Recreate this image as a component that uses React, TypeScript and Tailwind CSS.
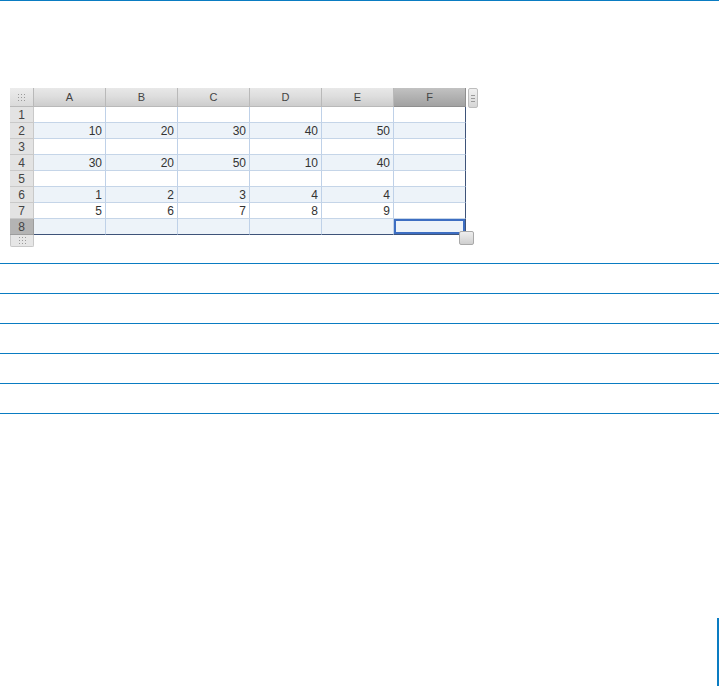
const columns = ["A", "B", "C", "D", "E", "F"];

const rows: (number | null)[][] = [
  [null, null, null, null, null, null],
  [10, 20, 30, 40, 50, null],
  [null, null, null, null, null, null],
  [30, 20, 50, 10, 40, null],
  [null, null, null, null, null, null],
  [1, 2, 3, 4, 4, null],
  [5, 6, 7, 8, 9, null],
  [null, null, null, null, null, null],
];

function Dots({ className = "" }: { className?: string }) {
  return (
    <svg width="9" height="7" viewBox="0 0 9 7" className={className}>
      {[0, 3, 6].map((y) =>
        [1, 4, 7].map((x) => (
          <rect key={`${x}-${y}`} x={x} y={y} width="1" height="1" fill="#9a9a9a" />
        ))
      )}
    </svg>
  );
}

function Sheet() {
  return (
    <div className="relative flex items-start">
      <div>
        <div className="grid grid-cols-[24px_repeat(6,72px)] font-['Liberation_Sans',Arial,sans-serif] text-[11px] text-[#333]">
          {/* header row */}
          <div className="flex h-[19px] items-center justify-center border-r border-b border-[#b9b9b9] bg-[linear-gradient(#ececec,#dadada)]">
            <Dots />
          </div>
          {columns.map((col) => (
            <div
              key={col}
              className={
                col === "F"
                  ? "flex h-[19px] items-center justify-center border-r border-b border-[#8f8f8f] bg-[linear-gradient(#c2c2c2_0%,#b3b3b3_45%,#a2a2a2_100%)] text-[#444]"
                  : "flex h-[19px] items-center justify-center border-r border-b border-[#b9b9b9] bg-[linear-gradient(#e8e8e8_0%,#dedede_45%,#cdcdcd_100%)] text-[#444]"
              }
            >
              {col}
            </div>
          ))}

          {/* body rows */}
          {rows.map((row, r) => {
            const last = r === rows.length - 1;
            const tint = r % 2 === 1 || last ? "bg-[#edf3f9]" : "bg-white";
            return [
              <div
                key={`h${r}`}
                className={
                  last
                    ? "flex h-[16px] items-center justify-center border-r border-b border-[#9d9d9d] bg-[#b4b4b4] text-[12px] text-[#444]"
                    : "flex h-[16px] items-center justify-center border-r border-b border-[#c9c9c9] bg-[#e3e3e3] text-[12px] text-[#444]"
                }
              >
                {r + 1}
              </div>,
              ...row.map((v, c) => {
                const lastCol = c === row.length - 1;
                const border = [
                  "border-r border-b",
                  lastCol ? "border-r-[#3e5379]" : "border-r-[#bfd1e8]",
                  last ? "border-b-[#3e5379]" : "border-b-[#c5d5e8]",
                ].join(" ");
                const selected = last && lastCol;
                return (
                  <div
                    key={`c${r}-${c}`}
                    className={`flex h-[16px] items-center justify-end pr-[3px] text-[12px] ${tint} ${border} ${
                      selected ? "shadow-[inset_0_0_0_2px_#3d6ec2]" : ""
                    }`}
                  >
                    {v ?? ""}
                  </div>
                );
              }),
            ];
          })}
        </div>
        {/* row footer */}
        <div className="flex h-[12px] w-[24px] items-center justify-center rounded-b-[2px] border border-t-0 border-[#c8c8c8] bg-[#e6e6e6]">
          <Dots />
        </div>
      </div>

      {/* column handle */}
      <div className="ml-[2px] flex h-[20px] w-[10px] items-center justify-center rounded-[2px] border border-[#bdbdbd] bg-[linear-gradient(#f0f0f0,#d6d6d6)]">
        <svg width="4" height="9" viewBox="0 0 4 9">
          {[1, 4, 7].map((y) => (
            <rect key={y} x="0" y={y} width="4" height="1" fill="#9a9a9a" />
          ))}
        </svg>
      </div>

      {/* resize corner */}
      <div className="absolute left-[449px] top-[143px] h-[14px] w-[15px] rounded-[2px] border border-[#a9a9a9] bg-[linear-gradient(#eeeeee,#cfcfcf)]" />
    </div>
  );
}

export default function App() {
  return (
    <div className="relative h-[686px] w-[719px] overflow-hidden bg-white">
      <div className="h-px bg-[#0a7cc2]" />
      <div className="ml-[10px] mt-[87px]">
        <Sheet />
      </div>
      <div className="mt-[16px]">
        {[0, 1, 2, 3, 4, 5].map((i) => (
          <div key={i} className="h-[30px] border-t border-[#0a7cc2]" />
        ))}
      </div>
      <div className="absolute right-0 top-[618px] h-[68px] w-[2px] bg-[#0a7cc2]" />
    </div>
  );
}
